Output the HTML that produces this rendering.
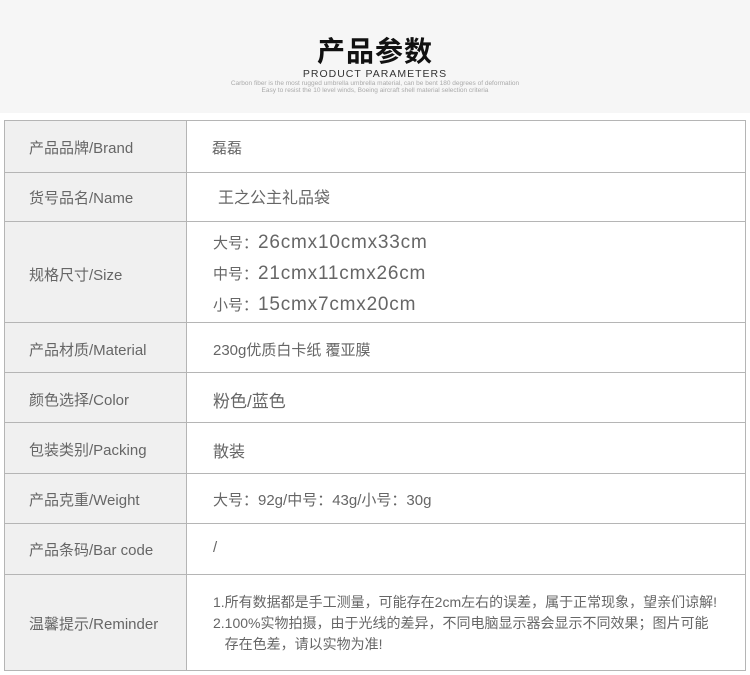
<!DOCTYPE html>
<html><head><meta charset="utf-8"><style>
body{margin:0;width:750px;height:675px;background:#fff;position:relative;overflow:hidden;font-family:"Liberation Sans","Noto Sans CJK SC",sans-serif;}
.hdr{position:absolute;left:0;top:0;width:750px;height:113px;background:#f6f6f6;}
.t1{position:absolute;top:30px;width:750px;text-align:center;font-size:28px;font-weight:bold;color:#111;letter-spacing:1px}
.t2{position:absolute;top:68px;width:750px;text-align:center;font-size:10.5px;color:#333;letter-spacing:1px}
.t3{position:absolute;top:80px;width:750px;text-align:center;font-size:6.5px;color:#aaa;line-height:7px}
.tb{position:absolute;left:4px;top:120px;width:740px;height:549px;border:1px solid #b5b5b5;}
.lc{position:absolute;left:0;top:0;width:181px;height:549px;background:#f0f0f0;border-right:1px solid #b5b5b5}
.hl{position:absolute;left:0;width:740px;height:1px;background:#b5b5b5}
.l{position:absolute;left:29px;font-size:15px;color:#666;}
.r{position:absolute;left:208px;font-size:15px;color:#666;}
.sz{font-size:19px;letter-spacing:0.8px}
</style></head><body>
<div class="hdr"></div>
<div class="t1">产品参数</div>
<div class="t2">PRODUCT PARAMETERS</div>
<div class="t3">Carbon fiber is the most rugged umbrella umbrella material, can be bent 180 degrees of deformation<br>Easy to resist the 10 level winds, Boeing aircraft shell material selection criteria</div>
<div class="tb"><div class="lc"></div>
<div class="hl" style="top:51px"></div><div class="hl" style="top:100px"></div><div class="hl" style="top:201px"></div><div class="hl" style="top:251px"></div><div class="hl" style="top:301px"></div><div class="hl" style="top:352px"></div><div class="hl" style="top:402px"></div><div class="hl" style="top:453px"></div>
</div>
<div class="l" style="top:137px">产品品牌/Brand</div><div class="r" style="top:137px;left:212px">磊磊</div>
<div class="l" style="top:187px">货号品名/Name</div><div class="r" style="top:184px;left:218px;font-size:16px">王之公主礼品袋</div>
<div class="l" style="top:264px">规格尺寸/Size</div>
<div class="r" style="top:232px;left:213px">大号：<span class="sz">26cmx10cmx33cm</span></div>
<div class="r" style="top:263px;left:213px">中号：<span class="sz">21cmx11cmx26cm</span></div>
<div class="r" style="top:294px;left:213px">小号：<span class="sz">15cmx7cmx20cm</span></div>
<div class="l" style="top:339px">产品材质/Material</div><div class="r" style="top:339px;left:213px">230g优质白卡纸 覆亚膜</div>
<div class="l" style="top:389px">颜色选择/Color</div><div class="r" style="top:387px;left:213px;font-size:17px">粉色/蓝色</div>
<div class="l" style="top:439px">包装类别/Packing</div><div class="r" style="top:438px;left:213px;font-size:16px">散装</div>
<div class="l" style="top:489px">产品克重/Weight</div><div class="r" style="top:489px;left:213px">大号：92g/中号：43g/小号：30g</div>
<div class="l" style="top:539px">产品条码/Bar code</div><div class="r" style="top:539px;left:213px">/</div>
<div class="l" style="top:613px">温馨提示/Reminder</div>
<div class="r" style="top:592px;left:213px;font-size:14px;line-height:21px">1.所有数据都是手工测量，可能存在2cm左右的误差，属于正常现象，望亲们谅解!<br>2.100%实物拍摄，由于光线的差异，不同电脑显示器会显示不同效果；图片可能<br>&nbsp;&nbsp;&nbsp;存在色差，请以实物为准!</div>
</body></html>
